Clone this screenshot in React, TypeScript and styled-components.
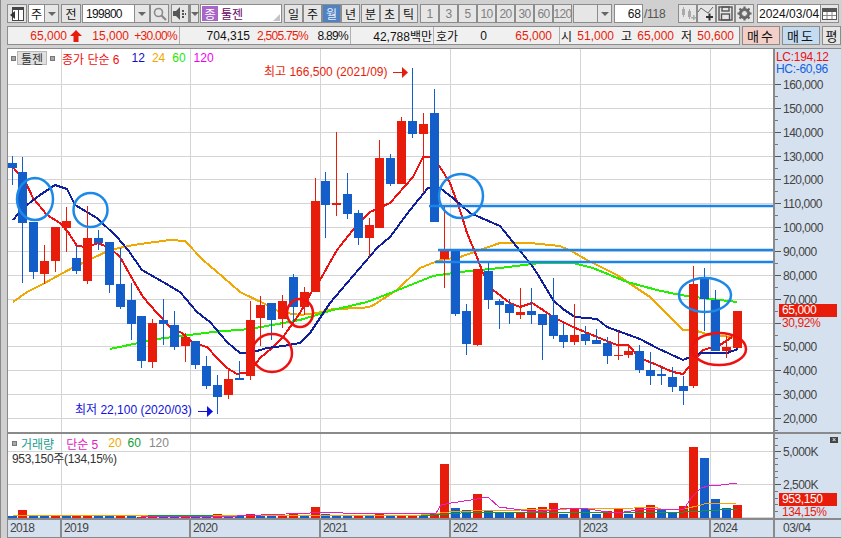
import React from "react"
import styled, { createGlobalStyle } from "styled-components"

const RED = "#e81c0a"
const BLUE = "#135ec8"
const FONT = `"Liberation Sans", "Noto Sans CJK KR", sans-serif`

const GlobalStyle = createGlobalStyle`
  html, body { margin: 0; padding: 0; background: #d0d0d0; overflow: hidden; }
  body { font-family: ${FONT}; font-size: 12px; }
`

const Page = styled.div`
  width: 842px;
  height: 538px;
  background: #d0d0d0;
  display: flex;
  flex-direction: column;
  box-sizing: border-box;
  padding: 4px 3px 0 6px;
  border-left: 1px solid #8a8a8a;
  position: relative;
`
const Toolbar = styled.div`
  display: flex;
  height: 19px;
  align-items: stretch;
  color: #111;
`
const Btn = styled.div<{ $w: number; $ml?: number; $on?: boolean; $off?: boolean }>`
  width: ${p => p.$w}px;
  margin-left: ${p => p.$ml ?? 0}px;
  box-sizing: border-box;
  border: 1px solid #8c8c8c;
  background: ${p => (p.$on ? "#4f82c3" : "#e6e6e6")};
  color: ${p => (p.$on ? "#e8f0ff" : p.$off ? "#808080" : "#111")};
  display: flex;
  align-items: center;
  justify-content: center;
  font-size: 12px;
  letter-spacing: ${p => (p.$off ? "-0.7px" : "0")};
  flex: none;
`
const Combo = styled.div<{ $w: number; $ml?: number }>`
  width: ${p => p.$w}px;
  margin-left: ${p => p.$ml ?? 0}px;
  box-sizing: border-box;
  border: 1px solid #8c8c8c;
  background: #e6e6e6;
  display: flex;
  flex: none;
`
const ComboValue = styled.div<{ $pad?: number; $right?: boolean; $ls?: number; $empty?: boolean }>`
  flex: 1;
  background: ${p => (p.$empty ? "#e6e6e6" : "#fff")};
  display: flex;
  align-items: center;
  justify-content: ${p => (p.$right ? "flex-end" : "flex-start")};
  padding: 0 ${p => p.$pad ?? 3}px;
  font-size: 12px;
  letter-spacing: ${p => p.$ls ?? 0}px;
  color: #111;
`
const ComboArrow = styled.div<{ $w: number }>`
  width: ${p => p.$w}px;
  border-left: 1px solid #8c8c8c;
  display: flex;
  align-items: center;
  justify-content: center;
  &::after {
    content: "";
    border-left: 4px solid transparent;
    border-right: 4px solid transparent;
    border-top: 4px solid #666;
  }
`
const NameBox = styled.div`
  width: 82px;
  margin-left: 1px;
  box-sizing: border-box;
  border: 1px solid #8c8c8c;
  background: #fff;
  display: flex;
  align-items: center;
  gap: 3px;
  padding-left: 1px;
  position: relative;
  flex: none;
  color: #660066;
  font-size: 12px;
  &::after {
    content: "";
    position: absolute;
    right: 1px;
    bottom: 1px;
    border-left: 7px solid transparent;
    border-bottom: 7px solid #c4c4c4;
  }
`
const MarketBadge = styled.span`
  background: #a866c8;
  color: #fff;
  width: 16px;
  height: 15px;
  display: flex;
  align-items: center;
  justify-content: center;
  font-size: 12px;
`
const PageTotal = styled.div`
  width: 35px;
  flex: none;
  color: #555;
  font-size: 12px;
  letter-spacing: -0.3px;
  display: flex;
  align-items: center;
  padding-left: 1px;
  box-sizing: border-box;
`
const QuoteRow = styled.div`
  display: flex;
  height: 19px;
  margin-top: 3px;
  align-items: stretch;
`
const QuotePanel = styled.div`
  display: flex;
  width: 733px;
  border: 1px solid #8c8c8c;
  box-sizing: border-box;
  background: #f0f0f0;
  flex: none;
`
const QuoteCell = styled.div<{ $w: number }>`
  width: ${p => p.$w}px;
  flex: none;
  display: flex;
  align-items: center;
  border-right: 1px solid #b0b0b0;
  box-sizing: border-box;
  &:last-child { border-right: 0; }
`
const Num = styled.span<{ $w: number; $red?: boolean; $tight?: boolean }>`
  width: ${p => p.$w}px;
  flex: none;
  text-align: right;
  color: ${p => (p.$red ? RED : "#111")};
  letter-spacing: ${p => (p.$tight ? "-0.7px" : "0")};
  white-space: nowrap;
`
const Lab = styled.span<{ $w: number; $ml?: number }>`
  width: ${p => p.$w}px;
  margin-left: ${p => p.$ml ?? 0}px;
  flex: none;
  color: #111;
  font-size: 12px;
`
const TradeBtn = styled.div<{ $bg: string; $w: number; $ml: number; $gap?: number }>`
  width: ${p => p.$w}px;
  margin-left: ${p => p.$ml}px;
  background: ${p => p.$bg};
  border: 1px solid #8c8c8c;
  box-sizing: border-box;
  display: flex;
  align-items: center;
  justify-content: center;
  font-size: 13px;
  letter-spacing: ${p => p.$gap ?? 0}px;
  color: #111;
  flex: none;
`
const ChartFrame = styled.div`
  margin-top: 3px;
  border-top: 1px solid #8a8a8a;
  border-left: 1px solid #8a8a8a;
  width: 833px;
  display: flex;
  flex-direction: column;
  background: #fff;
`
const PaneRow = styled.div<{ $h: number }>`
  display: flex;
  height: ${p => p.$h}px;
  border-bottom: 2px solid #8a8a8a;
`
const Plot = styled.div`
  width: 765px;
  flex: none;
  position: relative;
  background: #fff;
  svg { display: block; }
  text { font-family: ${FONT}; font-size: 12px; }
`
const Axis = styled.div`
  flex: 1;
  background: #d6e1ef;
  border-left: 2px solid #8a8a8a;
  position: relative;
  svg { display: block; }
  text { font-family: ${FONT}; font-size: 12px; letter-spacing: -0.5px; fill: #444; }
`
const LegendBar = styled.div`
  position: absolute;
  left: 3px;
  top: 2px;
  display: flex;
  align-items: center;
  font-size: 12px;
  height: 14px;
`
const Square = styled.span<{ $ml?: number; $mr?: number }>`
  width: 5px;
  height: 5px;
  background: #a8a8a8;
  border: 1px solid #777;
  box-sizing: border-box;
  margin-left: ${p => p.$ml ?? 0}px;
  margin-right: ${p => p.$mr ?? 0}px;
  flex: none;
`
const TitleChip = styled.span`
  width: 30px;
  height: 14px;
  background: #e0e0e0;
  border: 1px solid #b8b8b8;
  box-sizing: border-box;
  display: flex;
  align-items: center;
  justify-content: center;
  font-size: 12px;
  color: #333;
  margin-right: 3px;
`
const LegendItem = styled.span<{ $c: string; $ml?: number }>`
  color: ${p => p.$c};
  margin-left: ${p => p.$ml ?? 0}px;
  white-space: nowrap;
`
const VolumeInfo = styled.div`
  position: absolute;
  left: 4px;
  top: 15px;
  font-size: 12px;
  letter-spacing: -0.3px;
  color: #333;
  white-space: nowrap;
`
const LevelNote = styled.div`
  position: absolute;
  left: 1px;
  top: 2px;
  font-size: 12px;
  line-height: 12px;
  letter-spacing: -0.3px;
`
const LevelLine = styled.div<{ $c: string }>`
  color: ${p => p.$c};
`
const PriceTag = styled.div<{ $top: number }>`
  position: absolute;
  top: ${p => p.$top}px;
  left: 4px;
  width: 58px;
  height: 13px;
  background: ${RED};
  color: #fff;
  font-size: 12px;
  letter-spacing: -0.4px;
  line-height: 13px;
  padding-left: 3px;
  box-sizing: border-box;
`
const PctNote = styled.div<{ $top: number }>`
  position: absolute;
  top: ${p => p.$top}px;
  left: 7px;
  color: ${RED};
  font-size: 12px;
  letter-spacing: -0.4px;
  line-height: 12px;
`
const CloseChip = styled.div`
  position: absolute;
  top: 3px;
  right: 3px;
  width: 8px;
  height: 6px;
  background: #444;
  color: #fff;
  font-size: 7px;
  line-height: 6px;
  text-align: center;
`
const TimeRow = styled.div`
  display: flex;
  height: 17px;
  background: #d6e1ef;
  border-bottom: 1px solid #8a8a8a;
`
const TimeCell = styled.div<{ $w: number }>`
  width: ${p => p.$w}px;
  flex: none;
  box-sizing: border-box;
  border-right: 2px solid #8a8a8a;
  color: #444;
  font-size: 12px;
  letter-spacing: -0.6px;
  padding-left: 2px;
  line-height: 17px;
`
const TimeEnd = styled.div`
  flex: 1;
  color: #444;
  font-size: 12px;
  letter-spacing: -0.5px;
  padding-left: 8px;
  line-height: 17px;
`

type Candle = [number, number, number, number, number, "r" | "b"]

const candles: Candle[] = [
  [12.5, 163, 168, 156, 185, "b"], [22.5, 172, 223, 157, 283, "b"], [33.5, 222, 272, 222, 279, "b"], [44.5, 261, 274, 245, 284, "r"],
  [55.5, 227, 261, 227, 272, "r"], [66.5, 221, 228, 207, 252, "r"], [76.5, 258, 271, 246, 274, "b"], [87.5, 238, 281, 206, 284, "r"],
  [98.5, 238, 243, 230, 250, "b"], [109.5, 242, 285, 242, 293, "b"], [120.5, 284, 307, 248, 309, "b"], [131.5, 300, 324, 283, 340, "b"],
  [141.5, 316, 361, 316, 368, "b"], [152.5, 323, 362, 319, 368, "r"], [163.5, 320, 324, 299, 345, "b"], [174.5, 325, 347, 311, 350, "b"],
  [185.5, 337, 346, 333, 362, "r"], [195.5, 341, 365, 341, 369, "b"], [206.5, 366, 386, 356, 389, "b"], [217.5, 385, 397, 375, 414, "b"],
  [228.5, 379, 395, 369, 399, "r"], [239.5, 378, 380, 361, 380, "b"], [250.5, 320, 376, 301, 380, "r"], [260.5, 305, 318, 296, 346, "r"],
  [271.5, 303, 320, 303, 340, "b"], [282.5, 301, 319, 295, 328, "r"], [293.5, 277, 307, 274, 322, "b"], [304.5, 292, 307, 287, 315, "r"],
  [315.5, 201, 292, 178, 292, "r"], [325.5, 181, 205, 172, 238, "b"], [336.5, 203, 205, 132, 216, "r"], [347.5, 194, 214, 173, 219, "b"],
  [358.5, 213, 238, 210, 245, "b"], [369.5, 225, 238, 218, 257, "r"], [379.5, 158, 228, 140, 228, "r"], [390.5, 158, 184, 154, 186, "b"],
  [401.5, 121, 184, 117, 184, "r"], [412.5, 121, 134, 68, 138, "b"], [423.5, 124, 134, 113, 193, "r"], [434.5, 113, 222, 89, 222, "b"],
  [444.5, 251, 259, 207, 288, "r"], [455.5, 251, 314, 251, 316, "b"], [466.5, 311, 344, 304, 355, "b"], [477.5, 269, 345, 269, 346, "r"],
  [488.5, 271, 300, 262, 309, "b"], [499.5, 301, 305, 299, 329, "b"], [509.5, 304, 313, 299, 324, "b"], [520.5, 312, 315, 288, 319, "r"],
  [531.5, 311, 315, 288, 324, "b"], [542.5, 314, 325, 314, 360, "b"], [553.5, 315, 336, 278, 339, "b"], [563.5, 335, 342, 323, 348, "b"],
  [574.5, 335, 342, 304, 345, "r"], [585.5, 334, 341, 326, 345, "b"], [596.5, 340, 344, 329, 344, "b"], [607.5, 343, 356, 337, 364, "b"],
  [618.5, 355, 356, 331, 360, "r"], [628.5, 351, 355, 345, 358, "r"], [639.5, 351, 370, 345, 373, "b"], [650.5, 370, 376, 352, 385, "b"],
  [661.5, 374, 376, 367, 385, "b"], [672.5, 377, 387, 367, 392, "b"], [683.5, 386, 391, 376, 405, "b"], [693.5, 284, 386, 266, 388, "r"],
  [704.5, 279, 299, 268, 331, "b"], [715.5, 300, 351, 290, 351, "b"], [726.5, 347, 351, 336, 358, "r"], [737.5, 311, 348, 311, 348, "r"],
]

// volume bar tops, same order as candles
const volumes: [number, "r" | "b"][] = [
  [516, "b"], [510, "r"], [515, "b"], [515, "b"], [515, "r"], [515, "b"], [515, "r"], [515, "r"], [516, "b"], [516, "b"], [516, "r"], [516, "b"],
  [517, "r"], [517, "r"], [517, "b"], [517, "b"], [517, "r"], [517, "b"], [517, "b"], [514, "r"], [516, "b"], [516, "b"], [514, "r"], [516, "b"],
  [516, "b"], [515, "r"], [513, "r"], [516, "b"], [507, "r"], [514, "b"], [515, "b"], [515, "b"], [515, "r"], [516, "b"], [514, "r"], [516, "b"],
  [516, "r"], [516, "r"], [515, "b"], [513, "r"], [464, "r"], [508, "b"], [510, "b"], [494, "r"], [511, "b"], [513, "b"], [513, "b"], [513, "r"],
  [508, "r"], [507, "r"], [503, "r"], [514, "b"], [508, "r"], [509, "b"], [514, "b"], [511, "r"], [509, "r"], [514, "b"], [508, "r"], [505, "r"],
  [510, "b"], [513, "b"], [506, "r"], [447, "r"], [458, "b"], [499, "b"], [508, "b"], [505, "r"],
]

const maRed = "13,167 27,185 33,198 47,215 60,223 68,232 77,246 87,247 98,243 110,248 120,257 133,280 143,297 157,313 170,327 182,333 193,343 207,347 217,358 227,368 237,374 250,372 260,358 272,348 283,337 300,313 312,291 320,280 337,250 353,230 370,212 390,203 413,177 423,157 433,157 440,167 450,183 460,210 467,233 477,257 483,273 493,290 510,303 520,307 532,303 543,310 553,317 573,327 597,337 617,345 628,345 640,358 657,365 673,372 683,374 693,362 703,350 720,345 732,337"
const maBlue = "13,220 23,208 40,195 55,185 67,189 75,205 97,218 117,237 128,250 142,270 163,282 180,292 197,312 210,322 227,342 240,353 250,353 267,348 283,346 300,343 310,333 320,318 330,303 347,283 377,248 390,237 410,210 428,188 440,188 453,198 470,213 500,226 517,247 533,267 540,278 553,300 563,309 575,317 597,319 607,327 640,339 657,348 683,360 700,353 727,353 738,349"
const maOrange = "13,302 27,292 43,284 72,268 93,258 110,250 133,245 170,240 185,241 203,260 223,277 240,292 267,305 280,312 300,315 317,313 333,309 363,308 372,306 397,290 420,268 440,260 460,257 477,251 500,243 530,243 560,246 573,252 587,260 617,275 650,297 683,330 697,331 710,335 733,337"
const maGreen = "110,349 157,339 213,332 250,329 300,320 333,310 367,302 393,292 433,276 460,272 500,268 540,263 573,263 593,268 627,282 657,290 680,295 710,299 737,302"

const volMagenta = "140,516 213,517 310,513 320,512 342,512 343,513 363,513 436,513 441,505 451,503 471,500 488,497 499,507 514,509 534,512 569,508 588,509 608,512 624,512 638,510 684,509 691,498 701,488 708,486 721,485 737,483"
const volOrange = "13,515 147,515 147,516 213,516 213,515 385,515 421,515 449,512 471,511 521,510 568,509 634,508 654,507 661,509 684,509 701,505 704,504 737,503"
const volGreen = "147,516 385,515 421,516 461,513 554,512 684,512 737,509"

const gridX = [61.5, 190.5, 320.5, 450.5, 580.5, 710.5]
const priceLevels = [160, 150, 140, 130, 120, 110, 100, 90, 80, 70, 60, 50, 40, 30, 20]
const levelY = (i: number) => Math.round(84 + i * 23.85) + 0.5

const PriceChart = () => (
  <svg width={765} height={383} viewBox="8 49 765 383">
    {priceLevels.map((_, i) => (
      <line key={i} x1={8} x2={773} y1={levelY(i)} y2={levelY(i)} stroke="#d4d4d4" />
    ))}
    {gridX.map(x => (
      <line key={x} x1={x} x2={x} y1={49} y2={432} stroke="#d4d4d4" />
    ))}
    <g fill="none" strokeWidth={2} shapeRendering="crispEdges">
      <polyline points={maOrange} stroke="#f0a800" />
      <polyline points={maGreen} stroke="#22f000" />
      <polyline points={maRed} stroke="#f01010" />
      <polyline points={maBlue} stroke="#10209c" />
    </g>
    {candles.map(([x, top, bottom, wt, wb, c]) => {
      const col = c === "r" ? RED : BLUE
      return (
        <g key={x} shapeRendering="crispEdges">
          <line x1={x} x2={x} y1={wt} y2={wb} stroke={col} />
          <rect x={x - 4.5} y={top} width={9} height={bottom - top} fill={col} />
        </g>
      )
    })}
    <g stroke="#1c84e8" strokeWidth={2.4}>
      <line x1={429} x2={773} y1={206} y2={206} />
      <line x1={438} x2={773} y1={250} y2={250} />
      <line x1={435} x2={773} y1={262} y2={262} />
    </g>
    <g fill="none" stroke="#1c88e8" strokeWidth={2.5}>
      <ellipse cx={35} cy={199} rx={18} ry={21} />
      <ellipse cx={90.5} cy={210} rx={17} ry={17} />
      <ellipse cx={461} cy={196} rx={22} ry={22} />
      <ellipse cx={705} cy={295} rx={26} ry={17} />
    </g>
    <g fill="none" stroke="#f01010" strokeWidth={2.5}>
      <ellipse cx={272} cy={353} rx={20} ry={19} />
      <ellipse cx={300} cy={313} rx={13} ry={14} />
      <ellipse cx={719} cy={349} rx={27} ry={16} />
    </g>
    <text x={264} y={76} fill={RED}>최고 166,500 (2021/09)</text>
    <line x1={393} x2={403} y1={72.5} y2={72.5} stroke={RED} />
    <polygon points="402,67 408,72.5 402,78" fill={RED} />
    <text x={75} y={414} fill="#1010e0">최저 22,100 (2020/03)</text>
    <line x1={198} x2={208} y1={411.5} y2={411.5} stroke="#1010e0" />
    <polygon points="207,406 213,411.5 207,417" fill="#1010e0" />
  </svg>
)

const PriceAxis = () => (
  <svg width={65} height={383} viewBox="775 49 65 383">
    {priceLevels.map((v, i) => (
      <g key={v}>
        <line x1={775} x2={781} y1={levelY(i)} y2={levelY(i)} stroke="#555" />
        <line x1={775} x2={778} y1={levelY(i) + 12} y2={levelY(i) + 12} stroke="#777" />
        {v !== 60 && <text x={783} y={levelY(i) + 4}>{v + ",000"}</text>}
      </g>
    ))}
  </svg>
)

const VolumeChart = () => (
  <svg width={765} height={84} viewBox="8 434 765 84">
    {[451.5, 484.5, 517.5].map(y => (
      <line key={y} x1={8} x2={773} y1={y} y2={y} stroke="#d4d4d4" />
    ))}
    {gridX.map(x => (
      <line key={x} x1={x} x2={x} y1={434} y2={518} stroke="#d4d4d4" />
    ))}
    {candles.map(([x], i) => (
      <rect key={x} x={x - 4.5} y={volumes[i][0]} width={9} height={518 - volumes[i][0]} fill={volumes[i][1] === "r" ? RED : BLUE} shapeRendering="crispEdges" />
    ))}
    <g fill="none" shapeRendering="crispEdges">
      <polyline points={volGreen} stroke="#109c38" />
      <polyline points={volOrange} stroke="#f0a800" />
      <polyline points={volMagenta} stroke="#e020c0" />
    </g>
  </svg>
)

const volumeTicks: [number, string][] = [[451.5, "5,000K"], [484.5, "2,500K"]]

const VolumeAxis = () => (
  <svg width={65} height={84} viewBox="775 434 65 84">
    {volumeTicks.map(([y, t]) => (
      <g key={t}>
        <line x1={775} x2={781} y1={y} y2={y} stroke="#555" />
        <text x={783} y={y + 4}>{t}</text>
      </g>
    ))}
    {[438, 445, 458, 464, 471, 477, 491, 498, 504, 511].map(y => (
      <line key={y} x1={775} x2={778} y1={y + 0.5} y2={y + 0.5} stroke="#777" />
    ))}
  </svg>
)

const PanelIcon = () => (
  <svg width="16" height="16" viewBox="0 0 16 16">
    <rect x="3.5" y="1.5" width="11" height="13" fill="#fff" stroke="#444" />
    <rect x="4" y="2" width="10" height="2" fill="#444" />
    <rect x="9" y="4" width="1" height="10" fill="#444" />
    <polygon points="1,9 6,5 6,13" fill="#333" />
  </svg>
)
const SearchIcon = () => (
  <svg width="14" height="14" viewBox="0 0 14 14" fill="none" stroke="#8a8a8a" strokeWidth="1.6">
    <circle cx="5.5" cy="5.5" r="4" />
    <line x1="8.5" y1="8.5" x2="13" y2="13" strokeWidth="2.2" />
  </svg>
)
const SpeakerIcon = () => (
  <svg width="14" height="13" viewBox="0 0 14 13" fill="#555">
    <polygon points="0,4 3,4 7,0 7,13 3,9 0,9" />
    <rect x="9" y="3" width="2" height="2" />
    <rect x="9" y="6" width="2" height="2" />
    <rect x="9" y="9" width="2" height="2" />
    <rect x="12" y="6" width="1" height="2" />
  </svg>
)
const CandleIcon = () => (
  <svg width="16" height="15" viewBox="0 0 16 15" fill="#aaa">
    <rect x="2" y="3" width="3" height="6" /><rect x="3" y="1" width="1" height="10" />
    <rect x="8" y="5" width="3" height="6" /><rect x="9" y="3" width="1" height="10" />
    <rect x="11" y="11" width="5" height="1.5" /><rect x="13" y="9" width="1.5" height="5" />
  </svg>
)
const AddLineIcon = () => (
  <svg width="17" height="15" viewBox="0 0 17 15" fill="none">
    <polyline points="0,6 3,2 7,5 10,7 15,1" stroke="#666" />
    <rect x="8" y="10" width="7" height="2" fill="#333" />
    <rect x="10.5" y="7.5" width="2" height="7" fill="#333" />
  </svg>
)
const SaveIcon = () => (
  <svg width="15" height="15" viewBox="0 0 15 15" fill="none" stroke="#555" strokeWidth="1.4">
    <rect x="1" y="1" width="13" height="13" />
    <rect x="4" y="1" width="7" height="4" />
    <rect x="3.5" y="8" width="8" height="6" />
  </svg>
)
const GearIcon = () => (
  <svg width="15" height="15" viewBox="0 0 15 15">
    <circle cx="7.5" cy="7.5" r="4.2" fill="none" stroke="#666" strokeWidth="2.6" />
    <g stroke="#666" strokeWidth="2.2">
      <line x1="7.5" y1="0.5" x2="7.5" y2="14.5" />
      <line x1="0.5" y1="7.5" x2="14.5" y2="7.5" />
      <line x1="2.5" y1="2.5" x2="12.5" y2="12.5" />
      <line x1="12.5" y1="2.5" x2="2.5" y2="12.5" />
    </g>
    <circle cx="7.5" cy="7.5" r="3" fill="#e6e6e6" stroke="#666" />
  </svg>
)
const CalendarIcon = () => (
  <svg width="15" height="13" viewBox="0 0 15 13" fill="none" stroke="#555">
    <rect x="0.5" y="1.5" width="14" height="11" fill="#fff" />
    <rect x="0.5" y="1.5" width="14" height="3" fill="#555" />
    <path d="M5 5v7M10 5v7M1 8.5h13" stroke="#888" />
  </svg>
)
const ArrowWrap = styled.svg`
  margin-left: 3px;
  flex: none;
`
const UpArrow = () => (
  <ArrowWrap width="12" height="12" viewBox="0 0 12 12">
    <polygon points="6,0 12,6 8.5,6 8.5,12 3.5,12 3.5,6 0,6" fill={RED} />
  </ArrowWrap>
)

export default function App() {
  return (
    <Page>
      <GlobalStyle />
      <Toolbar>
        <Btn $w={20}><PanelIcon /></Btn>
        <Combo $w={31} $ml={1}><ComboValue $pad={2}>주</ComboValue><ComboArrow $w={13} /></Combo>
        <Btn $w={20} $ml={2}>전</Btn>
        <Combo $w={68} $ml={1}><ComboValue $ls={-0.7}>199800</ComboValue><ComboArrow $w={14} /></Combo>
        <Btn $w={19}><SearchIcon /></Btn>
        <Btn $w={18} $ml={2}><SpeakerIcon /></Btn>
        <Combo $w={10}><ComboArrow $w={9} /></Combo>
        <NameBox><MarketBadge>종</MarketBadge>툴젠</NameBox>
        <Btn $w={19} $ml={2}>일</Btn>
        <Btn $w={19}>주</Btn>
        <Btn $w={19} $on>월</Btn>
        <Btn $w={19}>년</Btn>
        <Btn $w={19} $ml={1}>분</Btn>
        <Btn $w={19}>초</Btn>
        <Btn $w={19}>틱</Btn>
        <Btn $w={19} $ml={2} $off>1</Btn>
        {["3", "5", "10", "20", "30", "60", "120"].map(t => (
          <Btn key={t} $w={19} $off>{t}</Btn>
        ))}
        <Combo $w={39} $ml={1}><ComboValue $empty /><ComboArrow $w={13} /></Combo>
        <Combo $w={29} $ml={2}><ComboValue $right $pad={1}>68</ComboValue></Combo>
        <PageTotal>/118</PageTotal>
        <Btn $w={19}><CandleIcon /></Btn>
        <Btn $w={19}><AddLineIcon /></Btn>
        <Btn $w={19}><SaveIcon /></Btn>
        <Btn $w={19}><GearIcon /></Btn>
        <Combo $w={63} $ml={3}><ComboValue $pad={1}>2024/03/04</ComboValue></Combo>
        <Btn $w={19}><CalendarIcon /></Btn>
      </Toolbar>
      <QuoteRow>
        <QuotePanel>
          <QuoteCell $w={172}>
            <Num $w={59} $red>65,000</Num><UpArrow />
            <Num $w={47} $red>15,000</Num>
            <Num $w={48} $red $tight>+30.00%</Num>
          </QuoteCell>
          <QuoteCell $w={171}>
            <Num $w={70}>704,315</Num>
            <Num $w={58} $red $tight>2,505.75%</Num>
            <Num $w={40} $tight>8.89%</Num>
          </QuoteCell>
          <QuoteCell $w={83}><Num $w={81}>42,788백만</Num></QuoteCell>
          <QuoteCell $w={126}>
            <Lab $w={26} $ml={2}>호가</Lab>
            <Num $w={25}>0</Num>
            <Num $w={65} $red>65,000</Num>
          </QuoteCell>
          <QuoteCell $w={179}>
            <Lab $w={12} $ml={1}>시</Lab>
            <Num $w={41} $red>51,000</Num>
            <Lab $w={12} $ml={7}>고</Lab>
            <Num $w={41} $red>65,000</Num>
            <Lab $w={12} $ml={7}>저</Lab>
            <Num $w={41} $red>50,600</Num>
          </QuoteCell>
        </QuotePanel>
        <TradeBtn $w={38} $ml={2} $bg="#f4cfc8" $gap={2}>매수</TradeBtn>
        <TradeBtn $w={38} $ml={2} $bg="#c4dcf2" $gap={2}>매도</TradeBtn>
        <TradeBtn $w={19} $ml={2} $bg="#e6e6e6">평</TradeBtn>
      </QuoteRow>
      <ChartFrame>
        <PaneRow $h={383}>
          <Plot>
            <PriceChart />
            <LegendBar>
              <Square $mr={1} />
              <TitleChip>툴젠</TitleChip>
              <Square $mr={7} />
              <LegendItem $c="#f01010">종가 단순 6</LegendItem>
              <LegendItem $c="#1010c0" $ml={12}>12</LegendItem>
              <LegendItem $c="#f0a800" $ml={7}>24</LegendItem>
              <LegendItem $c="#22e800" $ml={7}>60</LegendItem>
              <LegendItem $c="#f000f0" $ml={8}>120</LegendItem>
            </LegendBar>
          </Plot>
          <Axis>
            <PriceAxis />
            <LevelNote>
              <LevelLine $c="#f01010">LC:194,12</LevelLine>
              <LevelLine $c="#1060e0">HC:-60,96</LevelLine>
            </LevelNote>
            <PriceTag $top={255}>65,000</PriceTag>
            <PctNote $top={268}>30,92%</PctNote>
          </Axis>
        </PaneRow>
        <PaneRow $h={84}>
          <Plot>
            <VolumeChart />
            <LegendBar>
              <Square $ml={1} $mr={4} />
              <LegendItem $c="#209c90">거래량</LegendItem>
              <LegendItem $c="#e020c0" $ml={12}>단순 5</LegendItem>
              <LegendItem $c="#f0a800" $ml={10}>20</LegendItem>
              <LegendItem $c="#109c38" $ml={6}>60</LegendItem>
              <LegendItem $c="#888" $ml={8}>120</LegendItem>
            </LegendBar>
            <VolumeInfo>953,150주(134,15%)</VolumeInfo>
          </Plot>
          <Axis>
            <VolumeAxis />
            <CloseChip>×</CloseChip>
            <PriceTag $top={59}>953,150</PriceTag>
            <PctNote $top={72}>134,15%</PctNote>
          </Axis>
        </PaneRow>
        <TimeRow>
          <TimeCell $w={54}>2018</TimeCell>
          <TimeCell $w={129}>2019</TimeCell>
          <TimeCell $w={130}>2020</TimeCell>
          <TimeCell $w={130}>2021</TimeCell>
          <TimeCell $w={130}>2022</TimeCell>
          <TimeCell $w={130}>2023</TimeCell>
          <TimeCell $w={64}>2024</TimeCell>
          <TimeEnd>03/04</TimeEnd>
        </TimeRow>
      </ChartFrame>
    </Page>
  )
}
